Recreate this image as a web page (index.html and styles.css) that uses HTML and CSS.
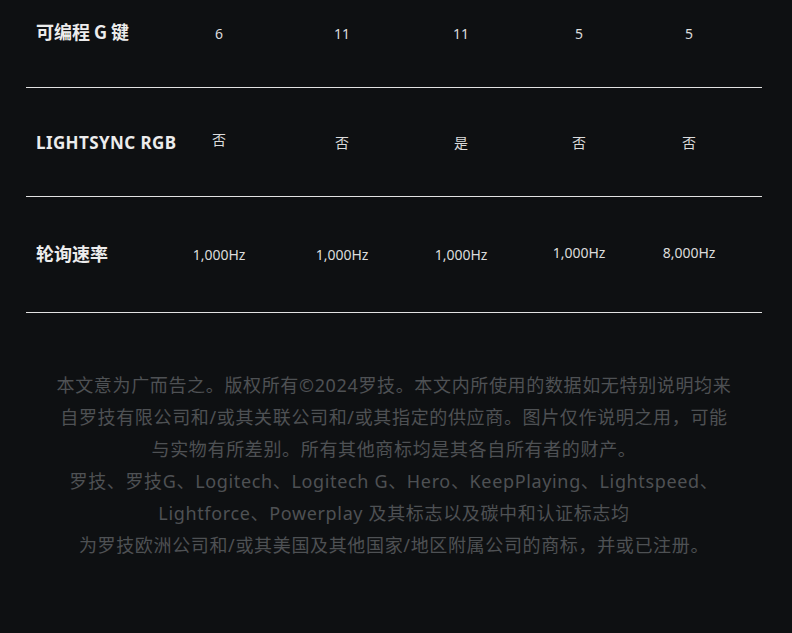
FILE: index.html
```html
<!DOCTYPE html>
<html lang="zh-CN">
<head>
<meta charset="utf-8">
<title>规格对比</title>
<link rel="stylesheet" href="styles.css">
</head>
<body>
<main class="page">
  <section class="specs">
    <div class="row row-first">
      <div class="label raise">可编程 G 键</div>
      <div class="val">6</div>
      <div class="val">11</div>
      <div class="val">11</div>
      <div class="val">5</div>
      <div class="val">5</div>
    </div>
    <div class="row row-mid">
      <div class="label latin">LIGHTSYNC RGB</div>
      <div class="val cjk up">否</div>
      <div class="val cjk">否</div>
      <div class="val cjk">是</div>
      <div class="val cjk">否</div>
      <div class="val cjk">否</div>
    </div>
    <div class="row row-last">
      <div class="label raise">轮询速率</div>
      <div class="val">1,000Hz</div>
      <div class="val">1,000Hz</div>
      <div class="val">1,000Hz</div>
      <div class="val high">1,000Hz</div>
      <div class="val high">8,000Hz</div>
    </div>
  </section>
  <footer class="legal">
    <p>本文意为广而告之。版权所有©2024罗技。本文内所使用的数据如无特别说明均来<br>自罗技有限公司和/或其关联公司和/或其指定的供应商。图片仅作说明之用，可能<br>与实物有所差别。所有其他商标均是其各自所有者的财产。</p>
    <p>罗技、罗技G、Logitech、Logitech G、Hero、KeepPlaying、Lightspeed、<br>Lightforce、Powerplay 及其标志以及碳中和认证标志均<br>为罗技欧洲公司和/或其美国及其他国家/地区附属公司的商标，并或已注册。</p>
  </footer>
</main>
</body>
</html>
```
FILE: styles.css
```css
html, body {
  margin: 0;
  padding: 0;
  background: #0e1012;
}
body {
  height: 633px;
  overflow: hidden;
  font-family: "Noto Sans", "Noto Sans CJK SC", sans-serif;
  color: #e6e6e6;
}
.page {
  padding: 0 30px 0 26px;
  margin-top: -21px;
}
.specs {
  display: flex;
  flex-direction: column;
}
.row {
  display: grid;
  grid-template-columns: 132px 122px 124px 114px 122px 98px 1fr;
  align-items: center;
  border-bottom: 1px solid #e2e2e2;
}
.row-first { height: 108px; }
.row-mid { height: 108px; }
.row-last { height: 115px; }
.label {
  padding-left: 10px;
  font-family: "Noto Sans CJK SC", sans-serif;
  font-weight: 700;
  font-size: 18px;
  color: #ececec;
  white-space: nowrap;
  position: relative;
}
.label.raise { top: -2px; }
.label.latin {
  font-family: "Noto Sans", "Noto Sans CJK SC", sans-serif;
  font-size: 17px;
  letter-spacing: 0.4px;
}
.val {
  text-align: center;
  font-size: 14px;
  color: #dcdcdc;
  position: relative;
  top: 0;
}
.val.cjk {
  font-family: "Noto Sans CJK SC", sans-serif;
  font-size: 14px;
}
.val.up { top: -3px; }
.val.high { top: -2px; }
.legal {
  padding: 56px 0 0;
  text-align: center;
  font-family: "Noto Sans", "Noto Sans CJK SC", sans-serif;
  font-size: 18px;
  line-height: 32px;
  letter-spacing: 0.65px;
  color: #4e5154;
}
.legal p {
  margin: 0;
}
```
